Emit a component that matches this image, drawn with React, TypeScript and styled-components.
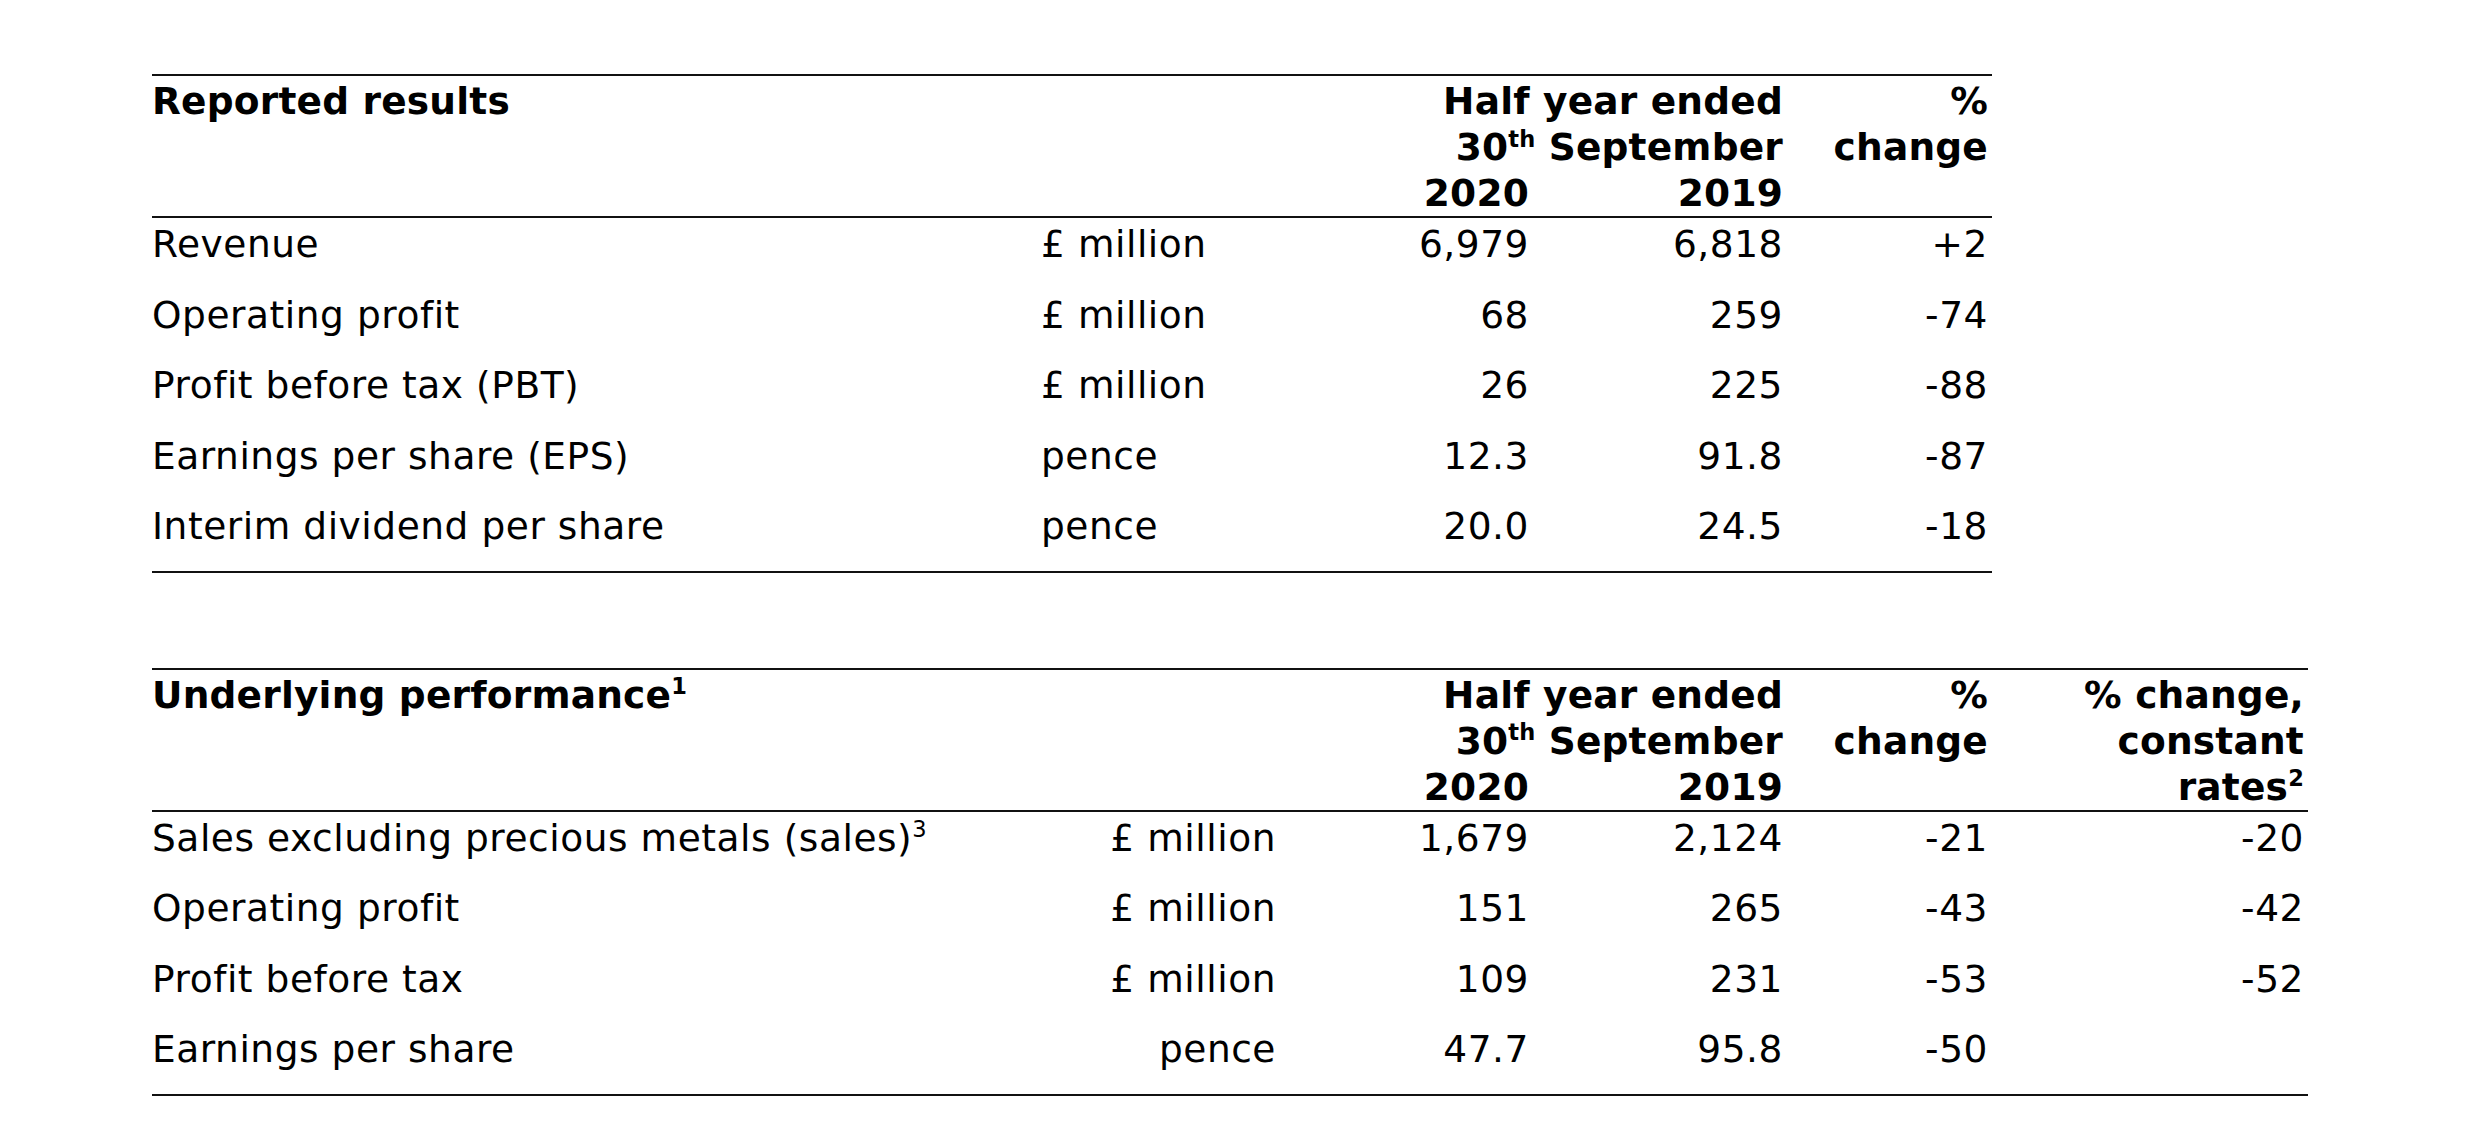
import styled, { createGlobalStyle } from 'styled-components';

const GlobalStyle = createGlobalStyle`
  html,
  body {
    margin: 0;
    background: #ffffff;
  }

  body {
    font-family: 'DejaVu Sans', Verdana, sans-serif;
    font-size: 37.5px;
    letter-spacing: 0.55px;
    color: #000000;
  }
`;

const BASE_COLS = '883px 245px 253px 254px 205px';
const WIDE_COLS = `${BASE_COLS} 316px`;

type Align = 'left' | 'right';

type Row = {
  label: string;
  note?: string;
  unit: string;
  current: string;
  previous: string;
  change: string;
  constant?: string;
};

const reported: Row[] = [
  { label: 'Revenue', unit: '£ million', current: '6,979', previous: '6,818', change: '+2' },
  { label: 'Operating profit', unit: '£ million', current: '68', previous: '259', change: '-74' },
  { label: 'Profit before tax (PBT)', unit: '£ million', current: '26', previous: '225', change: '-88' },
  { label: 'Earnings per share (EPS)', unit: 'pence', current: '12.3', previous: '91.8', change: '-87' },
  { label: 'Interim dividend per share', unit: 'pence', current: '20.0', previous: '24.5', change: '-18' },
];

const underlying: Row[] = [
  {
    label: 'Sales excluding precious metals (sales)',
    note: '3',
    unit: '£ million',
    current: '1,679',
    previous: '2,124',
    change: '-21',
    constant: '-20',
  },
  { label: 'Operating profit', unit: '£ million', current: '151', previous: '265', change: '-43', constant: '-42' },
  { label: 'Profit before tax', unit: '£ million', current: '109', previous: '231', change: '-53', constant: '-52' },
  { label: 'Earnings per share', unit: 'pence', current: '47.7', previous: '95.8', change: '-50', constant: '' },
];

function ResultsTable({
  title,
  titleNote,
  rows,
  unitAlign,
  withConstant,
}: {
  title: string;
  titleNote?: string;
  rows: Row[];
  unitAlign: Align;
  withConstant?: boolean;
}) {
  const cols = withConstant ? WIDE_COLS : BASE_COLS;

  return (
    <Table>
      <Head $cols={cols}>
        <HeadCell $col="1 / span 2" $row="1" $align="left">
          {title}
          {titleNote && <Sup>{titleNote}</Sup>}
        </HeadCell>
        <HeadCell $col="3 / span 2" $row="1 / span 2" $align="right">
          Half year ended
          <br />
          30<Sup>th</Sup> September
        </HeadCell>
        <HeadCell $col="3" $row="3" $align="right">
          2020
        </HeadCell>
        <HeadCell $col="4" $row="3" $align="right">
          2019
        </HeadCell>
        <HeadCell $col="5" $row="1 / span 2" $align="right">
          %
          <br />
          change
        </HeadCell>
        {withConstant && (
          <HeadCell $col="6" $row="1 / span 3" $align="right">
            % change,
            <br />
            constant
            <br />
            rates<Sup>2</Sup>
          </HeadCell>
        )}
      </Head>

      {rows.map((row) => (
        <BodyRow key={row.label} $cols={cols}>
          <Cell $align="left">
            {row.label}
            {row.note && <Sup>{row.note}</Sup>}
          </Cell>
          <UnitCell $align={unitAlign}>{row.unit}</UnitCell>
          <Cell $align="right">{row.current}</Cell>
          <Cell $align="right">{row.previous}</Cell>
          <Cell $align="right">{row.change}</Cell>
          {withConstant && <Cell $align="right">{row.constant}</Cell>}
        </BodyRow>
      ))}
    </Table>
  );
}

export default function App() {
  return (
    <Page>
      <GlobalStyle />
      <ResultsTable title="Reported results" rows={reported} unitAlign="left" />
      <ResultsTable
        title="Underlying performance"
        titleNote="1"
        rows={underlying}
        unitAlign="right"
        withConstant
      />
    </Page>
  );
}

const Page = styled.main`
  display: flex;
  flex-direction: column;
  align-items: flex-start;
  gap: 95px;
  padding: 74px 0 0 152px;
`;

const Table = styled.section`
  border-top: 2px solid #111111;
  border-bottom: 2px solid #111111;
`;

const Head = styled.div<{ $cols: string }>`
  display: grid;
  grid-template-columns: ${(p) => p.$cols};
  grid-template-rows: repeat(3, 46px);
  padding-top: 2px;
  border-bottom: 2px solid #111111;
  font-weight: 700;
  letter-spacing: 0.2px;
  line-height: 46px;
  white-space: nowrap;
`;

const HeadCell = styled.div<{ $col: string; $row: string; $align: Align }>`
  grid-column: ${(p) => p.$col};
  grid-row: ${(p) => p.$row};
  text-align: ${(p) => p.$align};
  padding-right: ${(p) => (p.$align === 'right' ? '4px' : '0')};
`;

const BodyRow = styled.div<{ $cols: string }>`
  display: grid;
  grid-template-columns: ${(p) => p.$cols};
  padding: 3px 0 21.5px;
  line-height: 46px;
  white-space: nowrap;
`;

const Cell = styled.div<{ $align: Align }>`
  text-align: ${(p) => p.$align};
  padding-right: ${(p) => (p.$align === 'right' ? '4px' : '0')};
`;

const UnitCell = styled(Cell)`
  padding-left: ${(p) => (p.$align === 'left' ? '6px' : '0')};
`;

const Sup = styled.sup`
  position: relative;
  top: -0.6em;
  font-size: 0.6em;
  line-height: 0;
  vertical-align: baseline;
`;
